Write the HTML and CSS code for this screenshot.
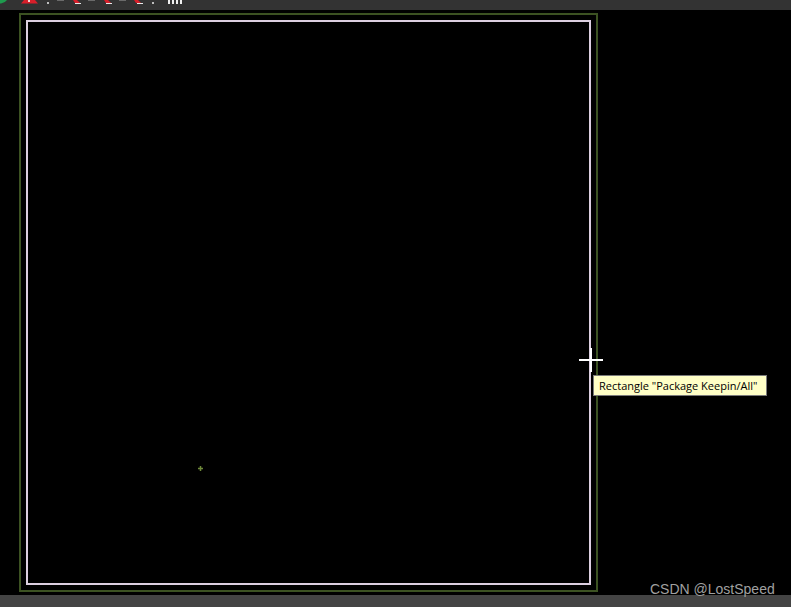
FILE: index.html
```html
<!DOCTYPE html>
<html lang="en">
<head>
    <meta charset="utf-8" />
    <title>Package Keepin</title>
    <link rel="stylesheet" href="styles.css">
</head>
<body>
    <div class="toolbar">
        <svg class="toolbar-icons" width="200" height="10" viewBox="0 0 200 10">
            <path d="M0 0H7Q5 3 1 3.5H0Z" fill="#1f9a4e" />
            <path d="M24 0H35L38 3.5H21Z" fill="#d81f2a" />
            <rect x="28" y="0" width="2" height="2" fill="#f2d6d6" />
            <rect x="47" y="2" width="2" height="2" fill="#bdbdbd" />
            <rect x="57" y="0" width="7" height="1" fill="#6a6a6a" />
            <path d="M73 0H77L80 3H75Z" fill="#d81f2a" />
            <rect x="75" y="3" width="6" height="1" fill="#e8e8e8" />
            <rect x="88" y="0" width="7" height="1" fill="#6a6a6a" />
            <path d="M104 0H108L111 3H106Z" fill="#d81f2a" />
            <rect x="106" y="3" width="6" height="1" fill="#e8e8e8" />
            <rect x="119" y="0" width="7" height="1" fill="#6a6a6a" />
            <path d="M134 0H138L141 3H136Z" fill="#d81f2a" />
            <rect x="137" y="3" width="6" height="1" fill="#e8e8e8" />
            <rect x="152" y="2" width="2" height="2" fill="#bdbdbd" />
            <rect x="168" y="0" width="2" height="4" fill="#f0f0f0" />
            <rect x="172" y="0" width="2" height="4" fill="#f0f0f0" />
            <rect x="176" y="0" width="2" height="4" fill="#f0f0f0" />
            <rect x="180" y="0" width="2" height="4" fill="#f0f0f0" />
        </svg>
    </div>
    <div class="canvas">
        <div class="keepin-outer">
            <div class="keepin-inner"></div>
        </div>
        <svg class="origin" width="7" height="7" viewBox="0 0 7 7">
            <path d="M3.5 1V6M1 3.5H6" stroke="#6f8a3a" stroke-width="1.5" />
        </svg>
        <div class="cursor-h"></div>
        <div class="cursor-v"></div>
        <div class="tooltip">Rectangle "Package Keepin/All"</div>
        <div class="watermark">CSDN @LostSpeed</div>
    </div>
    <div class="statusbar"></div>
</body>
</html>
```

FILE: styles.css
```css
html, body {
    height: 100%;
}

body {
    margin: 0;
    display: flex;
    flex-direction: column;
    overflow: hidden;
    background: #000;
}

.toolbar {
    height: 10px;
    flex: none;
    background: #333;
}

.toolbar-icons {
    display: block;
}

.canvas {
    flex: 1;
    position: relative;
    padding: 3px 0 3px 19px;
    background: #000;
}

.keepin-outer {
    box-sizing: border-box;
    width: 579px;
    height: 100%;
    padding: 5px 5px 5px 5px;
    border: 2px solid #3c5222;
}

.keepin-inner {
    box-sizing: border-box;
    height: 100%;
    border: 2px solid #dccfe0;
}

.origin {
    position: absolute;
    left: 197px;
    top: 455px;
}

.cursor-h {
    position: absolute;
    left: 579px;
    top: 349px;
    width: 24px;
    height: 2px;
    background: #fff;
}

.cursor-v {
    position: absolute;
    left: 590px;
    top: 338px;
    width: 2px;
    height: 24px;
    background: #fff;
}

.tooltip {
    position: absolute;
    left: 593px;
    top: 365px;
    box-sizing: border-box;
    width: 174px;
    height: 21px;
    padding-left: 5px;
    border: 1px solid #7a7a7a;
    background: #ffffc6;
    color: #000;
    font-family: "Open Sans", sans-serif;
    font-size: 11px;
    line-height: 19px;
    white-space: nowrap;
}

.watermark {
    position: absolute;
    left: 650px;
    top: 570px;
    color: #a0a0a0;
    font-family: "Liberation Sans", sans-serif;
    font-size: 14px;
    line-height: 18px;
    white-space: nowrap;
}

.statusbar {
    height: 12px;
    flex: none;
    background: #444;
}
```
